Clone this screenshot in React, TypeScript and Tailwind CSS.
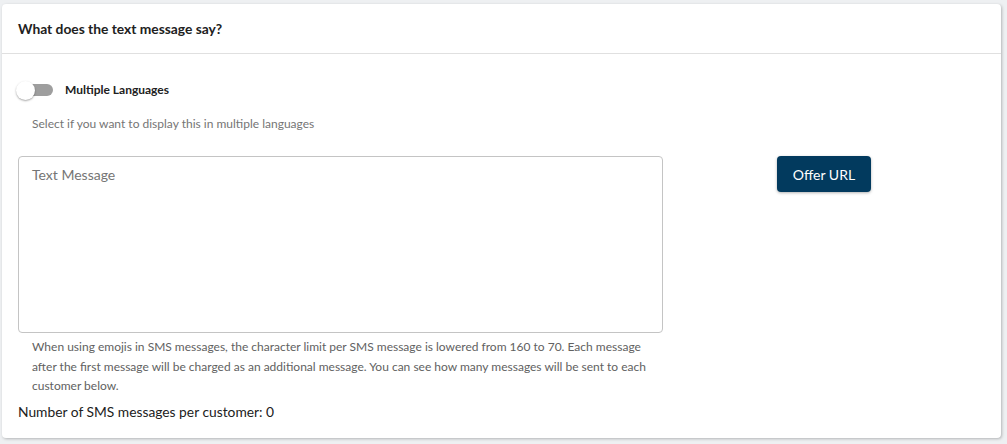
export default function App() {
  return (
    <div
      className="min-h-[444px] w-full bg-[#eef0f2] pt-[4px] pl-[2px]"
      style={{ fontFamily: "Lato, 'Liberation Sans', sans-serif" }}
    >
      <div className="w-[999px] h-[434px] rounded-[4px] bg-white shadow-[1px_1px_3px_rgba(0,0,0,0.25)]">
        {/* Header */}
        <div className="h-[50px] border-b border-[#e0e0e0] px-4 flex items-center">
          <h2 className="text-[13.8px] leading-[20px] font-bold text-[#212121] mt-[1px]">
            What does the text message say?
          </h2>
        </div>

        <div className="px-4">
          {/* Toggle */}
          <div className="mt-[27px] -ml-[2px] flex items-center h-[18px]">
            <div className="relative w-[37px] h-[18px] mr-[12px]">
              <div className="absolute left-[6px] top-[3px] w-[31px] h-[12px] rounded-full bg-[#9e9e9e]" />
              <div className="absolute left-0 top-0 w-[19px] h-[19px] -mt-[0.5px] rounded-full bg-white shadow-[0_1px_2px_rgba(0,0,0,0.35)]" />
            </div>
            <span className="text-[12px] font-bold text-[#212121]">Multiple Languages</span>
          </div>
          <p className="mt-[17px] ml-[14px] text-[12px] leading-[16px] text-[#757575]">
            Select if you want to display this in multiple languages
          </p>

          {/* Message + button */}
          <div className="mt-[24px] flex">
            <div className="w-[645px]">
              <textarea
                placeholder="Text Message"
                className="block w-full h-[177px] resize-none rounded-[4px] border border-[#c4c4c4] px-[13px] pt-[7px] text-[14px] text-[#212121] placeholder:text-[#757575] outline-none"
              />
              <p className="mt-[4px] mx-[14px] text-[12px] leading-[19.5px] text-[#616161]">
                When using emojis in SMS messages, the character limit per SMS message is lowered from 160 to 70. Each message after the first message will be charged as an additional message. You can see how many messages will be sent to each customer below.
              </p>
            </div>
            <div className="flex-1 flex justify-center">
              <button className="h-[36px] px-4 rounded-[4px] bg-[#023a5e] text-[14px] text-white shadow-[0_1px_3px_rgba(0,0,0,0.3)]">
                Offer URL
              </button>
            </div>
          </div>

          <p className="mt-[6px] text-[13.8px] leading-[20px] text-[#212121]">
            Number of SMS messages per customer: 0
          </p>
        </div>
      </div>
    </div>
  );
}
